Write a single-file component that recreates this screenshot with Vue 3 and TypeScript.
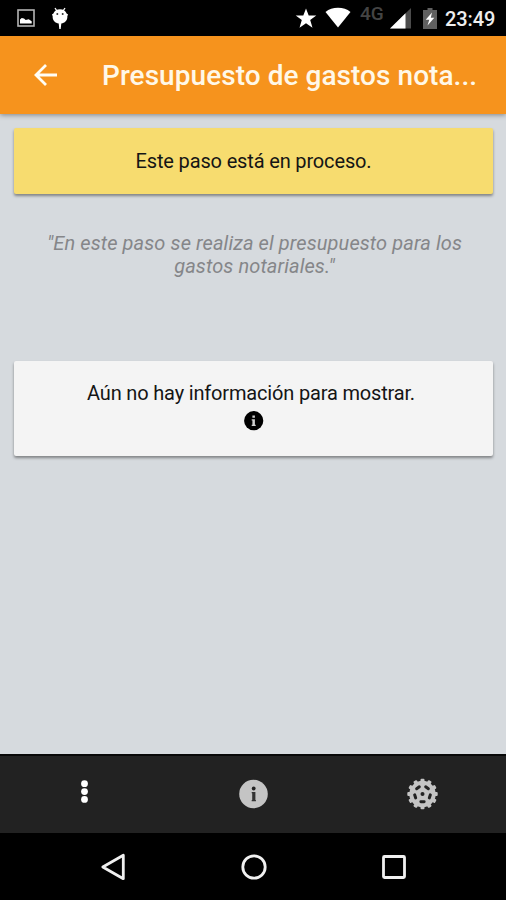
<script setup lang="ts">
const title: string = 'Presupuesto de gastos nota...'
const teeth: number[] = Array.from({ length: 12 }, (_, i) => i * 30)
const slots: number[] = [36, 108, 180, 252, 324]
</script>

<template>
  <div class="screen">
    <header class="status">
      <svg class="ic-picture" width="18" height="18" viewBox="0 0 18 18">
        <rect x="1" y="1" width="16" height="16" fill="none" stroke="#b4b4b4" stroke-width="1.6" />
        <path d="M3 14.500v-4l1.700-1.500 2.300.5 1.700 1.500 3-.8 3 2v2.300z" fill="#fff" />
      </svg>
      <svg class="ic-droid" width="18" height="24" viewBox="0 0 18 24">
        <path d="M4 2l2 3M14 2l-2 3" stroke="#fff" stroke-width="1.3" />
        <path d="M1 8.2l1.200-.4C3.500 4.500 6 3.200 9 3.200S14.500 4.500 15.800 7.800l1.200.4-.7 2.300C16.800 14 13.500 17.300 10.300 17.600L9.700 23H8.300l-.6-5.400C4.500 17.300 1.200 14 1.700 10.500z" fill="#fff" />
        <circle cx="6.300" cy="8" r="1" fill="#333" />
        <circle cx="11.700" cy="8" r="1" fill="#333" />
      </svg>
      <span class="spacer"></span>
      <svg class="ic-star" width="22" height="21" viewBox="0 0 22 21">
        <path d="M11 .5l2.700 7h7.600l-6.100 4.600 2.300 7.700L11 15.200l-6.500 4.600 2.300-7.700L.7 7.500h7.600z" fill="#fff" />
      </svg>
      <svg class="ic-wifi" width="26" height="21" viewBox="0 0 26 21">
        <path d="M.5 5C4 2 8 .7 13 .7S22 2 25.500 5L13 20.500z" fill="#fff" />
      </svg>
      <span class="net">4G</span>
      <svg class="ic-signal" width="21" height="21" viewBox="0 0 21 21">
        <path d="M0 20.500L21 0v20.500z" fill="#4b4b4b" />
        <path d="M0 20.500L15.500 5.300v15.200z" fill="#fff" />
      </svg>
      <svg class="ic-battery" width="14" height="21" viewBox="0 0 14 21">
        <path d="M4.500 0h5v2H14v19H0V2h4.500z" fill="#606060" />
        <path d="M9 4.500L2.700 11.700h3.600L4.500 17.500 11.300 9.700H7.800z" fill="#fff" />
      </svg>
      <span class="clock">23:49</span>
    </header>

    <div class="toolbar">
      <svg class="back" width="24" height="22" viewBox="0 0 24 22">
        <path d="M12 1L2 11l10 10M2 11h21" fill="none" stroke="#fffdf5" stroke-width="2.800" />
      </svg>
      <h1>{{ title }}</h1>
    </div>

    <main>
      <section class="card notice">Este paso está en proceso.</section>
      <p class="description">"En este paso se realiza el presupuesto para los<br />gastos notariales."</p>
      <section class="card empty">
        <span>Aún no hay información para mostrar.</span>
        <svg width="20" height="20" viewBox="0 0 20 20">
          <circle cx="9.700" cy="9.700" r="9.600" fill="#000" />
          <path d="M8.400 4.500h2.500v2.300H8.400zM7.700 8.200h3.200v5.500h.8V15h-4v-1.300h.7V9.500h-.7z" fill="#d0d0d0" />
        </svg>
      </section>
    </main>

    <nav class="tabs">
      <button aria-label="Más">
        <svg width="30" height="30" viewBox="0 0 30 30" fill="#fff">
          <circle cx="15.500" cy="4.700" r="3.400" />
          <circle cx="15.500" cy="12.600" r="3.400" />
          <circle cx="15.500" cy="20.400" r="3.400" />
        </svg>
      </button>
      <button aria-label="Información">
        <svg width="30" height="30" viewBox="0 0 30 30">
          <circle cx="15.500" cy="15" r="14.300" fill="#c4c4c4" />
          <circle cx="15.700" cy="9.500" r="1.900" fill="#222" />
          <path d="M13.700 13h3.700v8h.5v1.200h-4.200V21h.5v-6.800h-.5z" fill="#333" />
        </svg>
      </button>
      <button aria-label="Ajustes">
        <svg width="32" height="32" viewBox="-16.500 -16 32 32">
          <circle r="13.200" fill="#c4c4c4" />
          <rect v-for="a in teeth" :key="a" x="-2" y="-15.200" width="4" height="5" rx="1" fill="#c4c4c4" :transform="`rotate(${a})`" />
          <rect v-for="a in slots" :key="a" x="-3.100" y="-9.200" width="6.200" height="3" rx="1.400" fill="#222" :transform="`rotate(${a})`" />
          <circle r="2" fill="#222" />
        </svg>
      </button>
    </nav>

    <footer class="system">
      <svg width="28" height="28" viewBox="0 0 28 28"><path d="M23.300 2.300v23.400L2.800 14z" /></svg>
      <svg width="28" height="28" viewBox="0 0 28 28"><circle cx="14" cy="14" r="11.200" /></svg>
      <svg width="28" height="28" viewBox="0 0 28 28"><rect x="3.500" y="3.500" width="21" height="21" rx="1" /></svg>
    </footer>
  </div>
</template>

<style>
body {
  margin: 0;
  background: #d6dade;
}
</style>

<style scoped>
.screen {
  display: flex;
  flex-direction: column;
  width: 506px;
  height: 900px;
  overflow: hidden;
  background: #d6dade;
  color: #151515;
  font-family: Roboto, "Liberation Sans", sans-serif;
}
svg {
  display: block;
  flex: none;
}
.status {
  display: flex;
  align-items: flex-start;
  box-sizing: border-box;
  flex: none;
  height: 36px;
  padding: 0 11px 0 17px;
  background: #000;
}
.ic-picture {
  margin-top: 9px;
}
.ic-droid {
  margin: 6px 0 0 16px;
}
.spacer {
  flex: 1;
}
.ic-star {
  margin-top: 8px;
}
.ic-wifi {
  margin: 7px 0 0 8px;
}
.net {
  width: 25px;
  margin: 4px 0 0 9px;
  color: #444;
  font-size: 19px;
  font-weight: 500;
  line-height: 20px;
}
.ic-signal {
  margin: 8px 0 0 5px;
}
.ic-battery {
  margin: 8px 0 0 12px;
}
.clock {
  width: 50px;
  margin: 7px 0 0 8px;
  color: #eee;
  font-size: 20px;
  font-weight: 500;
  line-height: 24px;
  letter-spacing: -0.1px;
  white-space: nowrap;
}
.toolbar {
  display: flex;
  align-items: center;
  flex: none;
  height: 78px;
  padding-left: 34px;
  background: #f6931d;
  box-shadow: 0 1px 5px rgba(0, 0, 0, 0.4);
}
h1 {
  margin: 1px 0 0 44px;
  color: #fff8e8;
  font-size: 28px;
  font-weight: 500;
  line-height: 36px;
  letter-spacing: 0.05px;
  white-space: nowrap;
}
main {
  flex: 1;
  padding: 14px 13px 0 14px;
  font-size: 20px;
  text-align: center;
}
.card {
  box-sizing: border-box;
  border-radius: 2px;
  box-shadow: 0 2px 3px rgba(0, 0, 0, 0.4);
}
.notice {
  height: 66px;
  background: #f7dc6f;
  line-height: 66px;
  letter-spacing: -0.15px;
}
.description {
  margin: 38px 0 0 2px;
  color: #858689;
  font-style: italic;
  line-height: 23px;
  letter-spacing: 0.1px;
}
.empty {
  display: flex;
  flex-direction: column;
  align-items: center;
  height: 95px;
  margin-top: 83px;
  padding-top: 20px;
  background: #f4f4f4;
  line-height: 24px;
  letter-spacing: -0.17px;
}
.empty span {
  margin-right: 5px;
}
.empty svg {
  margin-top: 6px;
}
.tabs {
  display: flex;
  box-sizing: border-box;
  flex: none;
  height: 79px;
  padding-bottom: 1px;
  border-top: 2px solid #080808;
  background: #222;
}
button {
  display: flex;
  align-items: center;
  justify-content: center;
  flex: 1;
  padding: 0;
  border: 0;
  background: none;
}
.system {
  display: flex;
  align-items: center;
  justify-content: center;
  gap: 112px;
  flex: none;
  height: 67px;
  padding-left: 1px;
  background: #000;
}
.system svg {
  fill: none;
  stroke: #f0f0f0;
  stroke-width: 2.800;
  stroke-linejoin: round;
}
</style>
